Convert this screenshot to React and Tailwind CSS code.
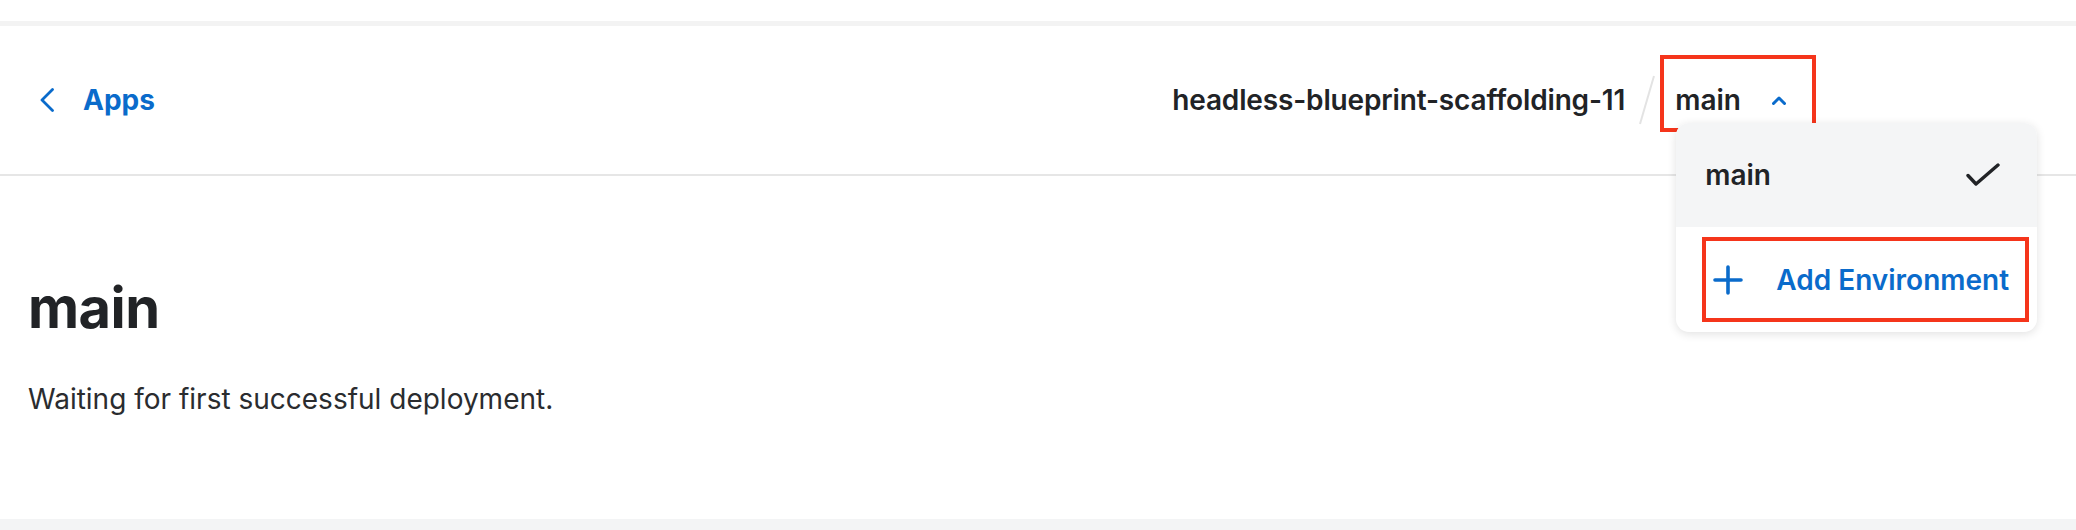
import { useState } from 'react'

function ChevronLeft() {
  return (
    <svg width="14" height="24" viewBox="0 0 14 24" fill="none" className="shrink-0">
      <path d="M12.5 1.5 2 12l10.5 10.5" stroke="currentColor" strokeWidth="2.8" strokeLinecap="round" strokeLinejoin="round" />
    </svg>
  )
}

function ChevronUp() {
  return (
    <svg width="14" height="9" viewBox="0 0 14 9" fill="none">
      <path d="M1.5 7.5 7 2l5.5 5.5" stroke="currentColor" strokeWidth="3" strokeLinecap="round" strokeLinejoin="round" />
    </svg>
  )
}

function CheckIcon() {
  return (
    <svg width="34" height="24" viewBox="0 0 34 24" fill="none">
      <path d="M2 12.5 10 21 32 2" stroke="currentColor" strokeWidth="3.4" strokeLinecap="round" strokeLinejoin="round" />
    </svg>
  )
}

function PlusIcon() {
  return (
    <svg width="30" height="30" viewBox="0 0 30 30" fill="none">
      <path d="M15 2v26M2 15h26" stroke="currentColor" strokeWidth="3.6" strokeLinecap="round" />
    </svg>
  )
}

export default function App() {
  const [open] = useState(true)

  return (
    <div className="relative h-[530px] w-full overflow-hidden bg-white font-['Inter',sans-serif] text-[#212326]">
      <div className="h-[21px] bg-white" />
      <div className="h-[5px] bg-[#f3f3f3]" />

      {/* top bar */}
      <header className="flex h-[150px] items-center border-b-2 border-[#e6e6e6] pl-[40px] pr-[290px]">
        <a href="#" className="flex items-center gap-[29px] text-[28px] font-bold text-[#0a6bcb]">
          <ChevronLeft />
          Apps
        </a>

        <div className="ml-auto flex items-center">
          <span className="text-[28px] font-semibold tracking-[-0.15px]">headless-blueprint-scaffolding-11</span>
          <svg width="20" height="52" viewBox="0 0 20 52" fill="none" className="ml-[12px] mr-[10px]">
            <path d="M17 2 3 50" stroke="#e3e3e3" strokeWidth="2" />
          </svg>

          <div className="relative ml-[8px]">
            <button className="flex h-[40px] items-center gap-[31px] text-[28px] font-semibold text-[#212326]">
              main
              <span className="text-[#0a6bcb]">
                <ChevronUp />
              </span>
            </button>
            <div className="pointer-events-none absolute -left-[15px] -top-[25px] h-[77px] w-[156px] border-4 border-[#f5351b]" />

            {open && (
              <div className="absolute left-[1px] top-[43px] z-10 w-[361px] overflow-hidden rounded-[13px] bg-white shadow-[0_2px_10px_rgba(0,0,0,0.12)]">
                <div className="flex h-[104px] items-center justify-between bg-[#f4f5f6] pl-[29px] pr-[37px]">
                  <span className="text-[28px] font-semibold">main</span>
                  <CheckIcon />
                </div>
                <div className="relative flex h-[105px] items-center pl-[37px] text-[#0a6bcb]">
                  <PlusIcon />
                  <span className="ml-[33px] text-[28px] font-semibold">Add Environment</span>
                  <div className="pointer-events-none absolute left-[26px] top-[10px] h-[85px] w-[327px] border-4 border-[#f5351b]" />
                </div>
              </div>
            )}
          </div>
        </div>
      </header>

      {/* content */}
      <main className="h-[343px] px-[28px] pt-[104px]">
        <h1 className="text-[56px] font-bold leading-none tracking-[-0.5px]">main</h1>
        <p className="mt-[42px] text-[28px] text-[#2a2c2f]">Waiting for first successful deployment.</p>
      </main>

      <div className="h-[11px] bg-[#f3f4f5]" />
    </div>
  )
}
